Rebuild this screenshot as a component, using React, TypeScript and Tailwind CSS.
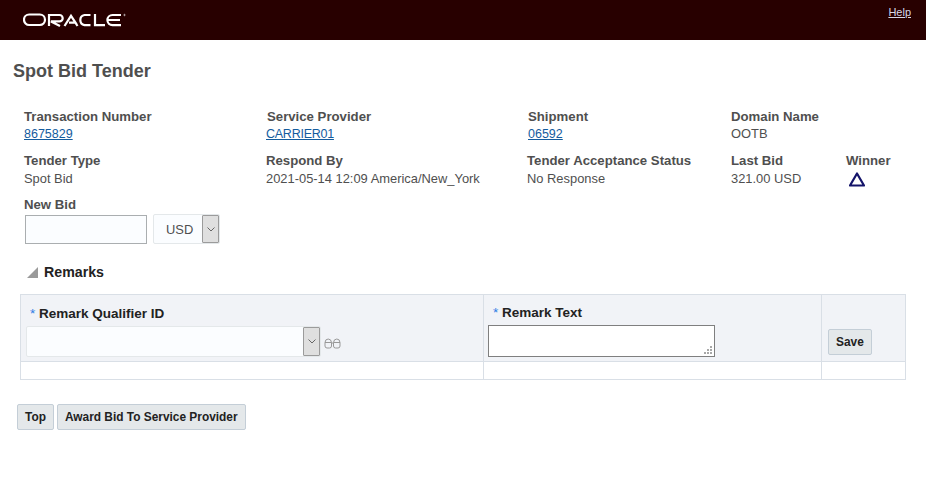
function OracleLogo() {
  return (
    <svg width="104" height="14" viewBox="0 0 104 14" fill="none" stroke="#fff" strokeWidth="2.200">
      <rect x="1" y="1.500" width="21" height="10.500" rx="5.200" />
      <path d="M26 13V2h10.500a3.100 3.100 0 0 1 0 6.400H28L37 13" />
      <path d="M41.500 13 48 2.800 52.500 9.600H46M50 6l4.500 7" />
      <path d="M67.500 2H61.500a5.200 5.200 0 0 0 0 10.200H67.500" />
      <path d="M72 1v11.200h10" />
      <path d="M98 2h-8.500a5.100 5.100 0 0 0 0 10.200H98M85.500 7H97" />
      <circle cx="101.500" cy="2" r="0.700" strokeWidth="0.600" />
    </svg>
  );
}

function Field({
  label,
  value,
  link,
  low,
  tight,
}: {
  label: string;
  value?: string;
  link?: boolean;
  low?: boolean;
  tight?: boolean;
}) {
  return (
    <div>
      <div className="text-[13.2px] leading-[17px] font-bold text-[#4f4f4f]">{label}</div>
      {value && (
        <div
          className={`leading-[18px] ${low ? "pt-px" : ""} ${tight ? "-ml-px tracking-[-0.25px]" : ""} ${
            link ? "text-[12.5px] text-[#145c9e] underline" : "text-[12.9px] text-[#4f4f4f]"
          }`}
        >
          {value}
        </div>
      )}
    </div>
  );
}

function Btn({ children }: { children: string }) {
  return (
    <button className="h-[26px] rounded-[2px] border border-[#c4ced7] bg-[#e4e8ea] px-[7px] pt-px text-[11.9px] font-bold text-[#222]">
      {children}
    </button>
  );
}

function Chevron() {
  return (
    <svg width="8" height="5" viewBox="0 0 8 5" fill="none" stroke="#666" strokeWidth="1">
      <path d="M0.500 0.500 4 4l3.500-3.500" />
    </svg>
  );
}

export default function App() {
  return (
    <div className="min-h-[482px] bg-white font-['Liberation_Sans',Arial,sans-serif]">
      <header className="flex h-10 items-start justify-between bg-[#280000] pr-[15px]">
        <div className="pt-[13px] pl-[23px]">
          <OracleLogo />
        </div>
        <a href="#" className="pt-[4px] text-[11px] text-[#d8d8e8] underline">
          Help
        </a>
      </header>

      <h1 className="mt-[21px] ml-[13px] text-[18px] leading-5 font-bold text-[#4f4f4f]">Spot Bid Tender</h1>

      <div className="mt-[27px] grid grid-cols-[243px_261px_203px_1fr] pl-[24px]">
        <Field label="Transaction Number" value="8675829" link />
        <Field label="Service Provider" value="CARRIER01" link tight />
        <Field label="Shipment" value="06592" link />
        <Field label="Domain Name" value="OOTB" />
      </div>

      <div className="mt-[9px] grid grid-cols-[242px_261px_204px_115px_1fr] pl-[24px]">
        <Field label="Tender Type" value="Spot Bid" low />
        <Field label="Respond By" value="2021-05-14 12:09 America/New_York" low />
        <Field label="Tender Acceptance Status" value="No Response" low />
        <Field label="Last Bid" value="321.00 USD" low />
        <div>
          <div className="text-[13.2px] leading-[17px] font-bold text-[#4f4f4f]">Winner</div>
          <svg className="mt-[3px] ml-[3px]" width="16" height="15" viewBox="0 0 16 15" fill="none">
            <path d="M8 1.500 15 13.500H1Z" stroke="#14146a" strokeWidth="2.200" strokeLinejoin="round" />
          </svg>
        </div>
      </div>

      <div className="mt-[8px] ml-[24px] text-[13.2px] leading-[17px] font-bold text-[#4f4f4f]">New Bid</div>
      <div className="mt-[1px] flex items-center pl-[25px]">
        <input className="h-[29px] w-[122px] border border-[#aaaeb0] bg-[#fbfdff]" />
        <div className="ml-[6px] flex h-[30px] w-[67px] rounded-[2px] border border-[#e4e8ea] bg-[#fbfdff]">
          <span className="flex-1 pl-[12px] text-[12.9px] leading-[30px] text-[#4f4f4f]">USD</span>
          <span className="flex w-[17px] items-center justify-center rounded-[1px] border border-[#9b9b9b] bg-[#dfdfdf]">
            <Chevron />
          </span>
        </div>
      </div>

      <div className="mt-[18px] flex items-center pl-[26px]">
        <svg width="12" height="12" viewBox="0 0 12 12">
          <path d="M12 1V12H1Z" fill="#9a9a9a" />
        </svg>
        <span className="ml-[6px] text-[14.200px] leading-[20px] font-bold text-[#222]">Remarks</span>
      </div>

      <div className="mx-[20px] mt-[12px] grid grid-cols-[463px_338px_1fr] border border-[#d9dfe6]">
        <div className="flex h-[67px] flex-col border-r border-b border-[#d9dfe6] bg-[#f1f3f7] pt-[10px] pl-[9px]">
          <div className="text-[13.500px] leading-[17px] font-bold text-[#222]">
            <span className="font-normal text-[#2d7be5]">*</span> Remark Qualifier ID
          </div>
          <div className="mt-[4px] -ml-[4px] flex items-center">
            <div className="flex h-[31px] w-[295px] justify-end rounded-[2px] border border-[#e4e8ea] bg-[#fbfdff]">
              <span className="flex w-[17px] items-center justify-center rounded-[1px] border border-[#9b9b9b] bg-[#dfdfdf]">
                <Chevron />
              </span>
            </div>
            <svg className="mt-[3px] ml-[3px]" width="17" height="11" viewBox="0 0 17 11" fill="none" stroke="#999">
              <path d="M1 4.500Q1.200 1 4.200 1T7.500 4.500M9.500 4.500Q9.800 1 12.800 1T16 4.500" />
              <path d="M1 4.500H7.500V8a2 2 0 0 1-2 2H3a2 2 0 0 1-2-2ZM9.500 4.500H16V8a2 2 0 0 1-2 2H11.500a2 2 0 0 1-2-2ZM7.500 5h2" />
            </svg>
          </div>
        </div>
        <div className="flex h-[67px] flex-col border-r border-b border-[#d9dfe6] bg-[#f1f3f7] pt-[9px] pl-[9px]">
          <div className="text-[13.500px] leading-[17px] font-bold text-[#222]">
            <span className="font-normal text-[#2d7be5]">*</span> Remark Text
          </div>
          <div className="relative mt-[4px] -ml-[5px] h-[32px] w-[227px] border border-[#7f7f7f] bg-white">
            <svg className="absolute right-[1px] bottom-[1px]" width="9" height="9" viewBox="0 0 9 9" fill="#a8a8a8">
              <path d="M6 0h2v2H6ZM3 3h2v2H3ZM6 3h2v2H6ZM0 6h2v2H0ZM3 6h2v2H3ZM6 6h2v2H6Z" />
            </svg>
          </div>
        </div>
        <div className="flex h-[67px] items-end border-b border-[#d9dfe6] bg-[#f1f3f7] pb-[6px] pl-[6px]">
          <Btn>Save</Btn>
        </div>
        <div className="h-[17px] border-r border-[#d9dfe6]" />
        <div className="h-[17px] border-r border-[#d9dfe6]" />
        <div className="h-[17px]" />
      </div>

      <div className="mt-[24px] flex gap-[3px] pl-[17px]">
        <Btn>Top</Btn>
        <Btn>Award Bid To Service Provider</Btn>
      </div>
    </div>
  );
}
